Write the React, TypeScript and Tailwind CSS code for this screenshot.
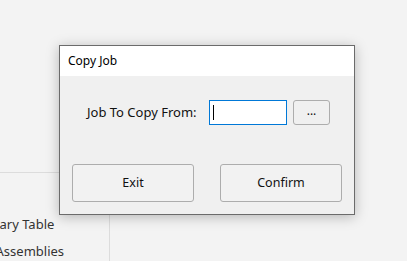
import React from "react";

export default function App() {
  const font = { fontFamily: '"Noto Sans", "Open Sans", sans-serif' };
  return (
    <div className="relative w-[407px] h-[261px] overflow-hidden bg-[#f3f3f3]" style={font}>
      <div className="flex flex-col h-full">
        <div className="h-[172px] shrink-0" />
        <div className="flex flex-1 min-h-0">
          <div className="w-[110px] border-t border-r border-[#dcdcdc] overflow-hidden pt-[42px] text-[13px] text-[#333]">
            <div className="h-[27px] leading-[18px] whitespace-nowrap -ml-[40px]">Summary Table</div>
            <div className="h-[27px] leading-[18px] whitespace-nowrap -ml-[31px]">Sub Assemblies</div>
          </div>
        </div>
      </div>

      <div className="absolute left-[59px] top-[45px] w-[296px] h-[170px] border border-[#6b6b6b] bg-[#f0f0f0] shadow-[0_2px_12px_rgba(0,0,0,0.25)] flex flex-col">
        <div className="h-[30px] bg-white flex items-center pl-[8px] text-[12px] text-black">Copy Job</div>
        <div className="flex items-center pt-[24px] pl-[27px] text-[13px] text-[#111]">
          <span className="w-[122px]">Job To Copy From:</span>
          <div className="w-[78px] h-[25px] bg-white border border-[#0078d7] flex items-center pl-[3px]">
            <div className="w-px h-[15px] bg-black" />
          </div>
          <div className="ml-[6px] w-[37px] h-[25px] rounded-[3px] border border-[#adadad] bg-[#f0f0f0] flex items-center justify-center text-[12px] leading-none pb-[3px]">...</div>
        </div>
        <div className="flex pl-[12px] pt-[39px] gap-[26px] text-[12.5px] text-[#111]">
          <div className="w-[122px] h-[38px] rounded-[3px] border border-[#adadad] bg-[#f2f2f2] flex items-center justify-center">Exit</div>
          <div className="w-[122px] h-[38px] rounded-[3px] border border-[#adadad] bg-[#f2f2f2] flex items-center justify-center">Confirm</div>
        </div>
      </div>
    </div>
  );
}
